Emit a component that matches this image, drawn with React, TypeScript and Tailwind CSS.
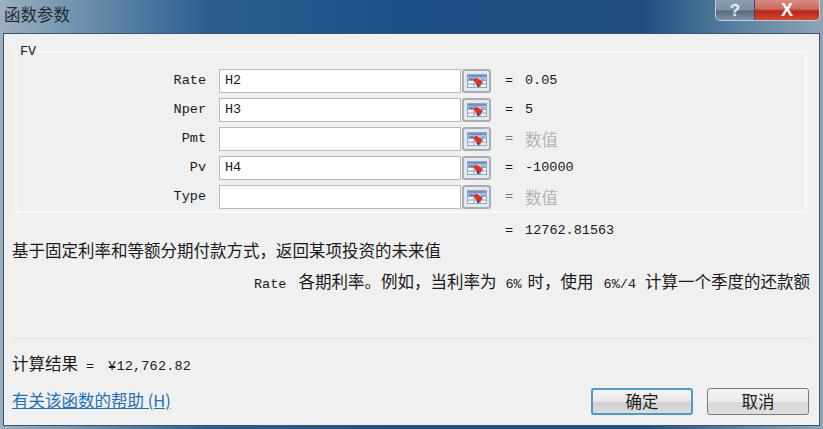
import React from "react";

const cjk = "font-['Noto_Sans_CJK_SC',sans-serif] text-[16.5px]";
const mono = "font-['Liberation_Mono','Noto_Sans_CJK_SC',monospace] text-[13.5px]";

function RefIcon() {
  return (
    <svg width="24" height="18" viewBox="0 0 24 18">
      <rect x="2.5" y="2.5" width="19" height="13" fill="#f2f5fa" stroke="#8fa6c4" strokeWidth="1" />
      <rect x="3" y="3" width="18" height="2.5" fill="#6f93c4" />
      <path d="M3 8.5H21M3 12H21M9 5V15M15 5V15" stroke="#8aa2c4" strokeWidth="1" />
      <rect x="3.5" y="6" width="5" height="2" fill="#5f86bd" />
      <rect x="16" y="6" width="4.5" height="2" fill="#8fb0d8" />
      <path d="M8 7.5L11.5 5.5L18 10L15.5 13.5L12 13Z" fill="#d9342b" />
      <path d="M11 12.5L15.5 13.5L13 15.5Z" fill="#3a4250" />
    </svg>
  );
}

function Row({ label, value, result, muted }: { label: string; value: string; result: string; muted?: boolean }) {
  return (
    <div className="flex h-[24px] items-center">
      <div className={`w-[190px] pr-[1px] text-right ${mono} text-[#1a1a1a]`}>{label}</div>
      <div className={`ml-[12px] flex h-[24px] w-[242px] items-center border border-[#b4bac0] bg-white pl-[5px] ${mono} text-[#1a1a1a]`}>{value}</div>
      <div className="ml-[1px] flex h-[24px] w-[29px] items-center justify-center rounded-[3px] border-2 border-[#a9adb1] bg-[#e4e9ef]">
        <RefIcon />
      </div>
      <div className={`ml-[14px] w-[20px] ${mono} ${muted ? "text-[#777]" : "text-[#1a1a1a]"}`}>=</div>
      <div className={muted ? `${cjk} text-[#b4b4b4]` : `${mono} text-[#1a1a1a]`}>{result}</div>
    </div>
  );
}

export default function App() {
  return (
    <div className="flex h-[429px] w-[823px] flex-col overflow-hidden bg-[linear-gradient(90deg,#9db0bf_0%,#6d90ad_10%,#2c5f90_25%,#1b4e84_50%,#1f4e7e_78%,#5b82a3_90%,#8ea4b6_100%)]">
      <div className="flex h-[33px] shrink-0 items-start justify-between">
        <div className={`ml-[4px] mt-[-1px] ${cjk} leading-[30px] text-[#1f2c38]`}>函数参数</div>
        <div className="mr-[3px] flex h-[21px] w-[105px] overflow-hidden rounded-b-[5px] border border-t-0 border-[#c3ced8]">
          <div className="flex w-[39px] items-center justify-center border-r border-[#3d4d5e] bg-[linear-gradient(180deg,#8b9db0_0%,#7d90a5_50%,#52697f_55%,#7f94a8_100%)] font-['Liberation_Sans',sans-serif] text-[17px] font-bold leading-none text-[#e9eef3]">?</div>
          <div className="flex flex-1 items-center justify-center bg-[linear-gradient(180deg,#d98a80_0%,#cc6c60_45%,#b8261a_55%,#d24a2f_100%)] font-['Liberation_Sans',sans-serif] text-[18px] font-bold leading-none text-white">X</div>
        </div>
      </div>
      <div className="mx-[3px] mb-[3px] flex min-h-0 flex-1 flex-col border border-[#3b5570] bg-[#f0f0f0] pl-[8px] pr-[10px]">
        <fieldset className="ml-[3px] mr-[2px] mt-[11px] h-[168px] rounded-[2px] border-2 border-[#f8f8f8]">
          <legend className={`ml-[1px] px-[2px] ${mono} leading-[14px] text-[#1a1a1a]`}>FV</legend>
          <div className="mt-[10px] flex flex-col gap-[5px]">
            <Row label="Rate" value="H2" result="0.05" />
            <Row label="Nper" value="H3" result="5" />
            <Row label="Pmt" value="" result="数值" muted />
            <Row label="Pv" value="H4" result="-10000" />
            <Row label="Type" value="" result="数值" muted />
          </div>
        </fieldset>
        <div className={`ml-[493px] mt-[10px] h-[16px] leading-[16px] ${mono} text-[#1a1a1a]`}>
          <span className="mr-[12px]">=</span>12762.81563
        </div>
        <div className={`mt-[1px] h-[20px] leading-[20px] ${cjk} text-[#1a1a1a]`}>基于固定利率和等额分期付款方式，返回某项投资的未来值</div>
        <div className={`-mr-[1px] mt-[11px] flex h-[20px] items-baseline justify-end leading-[20px] ${cjk} text-[#1a1a1a]`}>
          <span className={`${mono} mr-[12px]`}>Rate</span>
          <span>各期利率。例如，当利率为</span>
          <span className={`${mono} ml-[9px] mr-[6px]`}>6%</span>
          <span>时，使用</span>
          <span className={`${mono} ml-[10px] mr-[9px]`}>6%/4</span>
          <span>计算一个季度的还款额</span>
        </div>
        <div className="-mr-[2px] mt-[47px] h-[1px] shrink-0 bg-[#e2e2e2]" />
        <div className={`mt-[14px] flex h-[20px] items-baseline leading-[20px] ${cjk} text-[#1a1a1a]`}>
          <span>计算结果</span>
          <span className={`${mono} ml-[8px]`}>=</span>
          <span className={`${mono} ml-[14px] tracking-[0.2px]`}>¥12,762.82</span>
        </div>
        <div className="mt-[15px] flex items-center justify-between">
          <a className={`mb-[3px] ${cjk} leading-[20px] text-[#1f6fb5] underline`}>有关该函数的帮助 (H)</a>
          <div className="flex gap-[14px]">
            <button className={`h-[27px] w-[102px] rounded-[3px] border-2 border-[#4d9ac4] bg-[linear-gradient(180deg,#f4f4f4_0%,#e6e6e6_50%,#cfcfcf_55%,#dcdcdc_100%)] ${cjk} leading-none text-[#1a1a1a]`}>确定</button>
            <button className={`h-[27px] w-[102px] rounded-[3px] border border-[#7b7b7b] bg-[linear-gradient(180deg,#f4f4f4_0%,#ebebeb_50%,#d9d9d9_55%,#dedede_100%)] ${cjk} leading-none text-[#1a1a1a]`}>取消</button>
          </div>
        </div>
      </div>
    </div>
  );
}
